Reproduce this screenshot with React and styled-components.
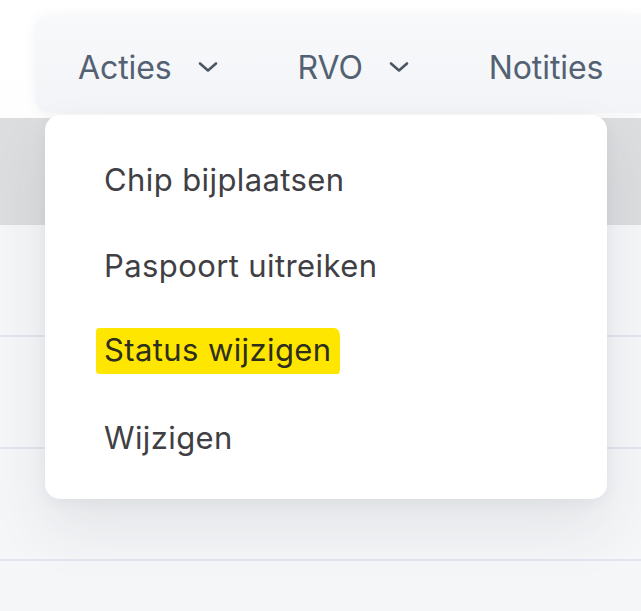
import React from "react";
import styled, { createGlobalStyle } from "styled-components";

const GlobalStyle = createGlobalStyle`
  html, body {
    margin: 0;
    padding: 0;
    background: #ffffff;
  }
  body {
    font-family: Inter, "Noto Sans", "Liberation Sans", sans-serif;
  }
`;

const Page = styled.div`
  position: relative;
  width: 641px;
  height: 611px;
  overflow: hidden;
  background: linear-gradient(180deg, #ffffff 0%, #fafbfc 100%);
`;

const Toolbar = styled.div`
  display: flex;
  align-items: center;
  gap: 80px;
  margin: 14px 0 0 35px;
  height: 99px;
  padding: 7px 0 0 43px;
  box-sizing: border-box;
  background: linear-gradient(180deg, #f8f9fb 0%, #f2f4f7 100%);
  border-radius: 16px 0 0 16px;
  box-shadow: 0 2px 14px rgba(30, 40, 60, 0.05);
`;

const TabButton = styled.div`
  display: flex;
  align-items: center;
  gap: 26px;
  font-size: 32px;
  color: #536173;
  letter-spacing: -0.1px;
`;

const Chevron = () => (
  <svg width="20" height="12" viewBox="0 0 20 12" fill="none">
    <path
      d="M2 2.5 L10 9.5 L18 2.5"
      stroke="#4a5565"
      strokeWidth="2.6"
      strokeLinecap="round"
      strokeLinejoin="round"
    />
  </svg>
);

const Table = styled.div`
  margin-top: 5px;
  display: flex;
  flex-direction: column;
`;

const HeaderRow = styled.div`
  height: 107px;
  background: #dcdddf;
`;

const Row = styled.div`
  height: 110px;
  border-bottom: 2px solid #e4e6ef;
  background: #f5f6f8;
`;

const Menu = styled.div`
  position: absolute;
  left: 45px;
  top: 115px;
  width: 562px;
  padding: 21px 0 19px;
  background: #ffffff;
  border-radius: 15px;
  box-shadow: 0 30px 60px rgba(40, 50, 70, 0.09), 0 4px 14px rgba(40, 50, 70, 0.05);
  display: flex;
  flex-direction: column;
`;

const MenuItem = styled.div`
  height: 86px;
  display: flex;
  align-items: center;
  padding-left: 59px;
  font-size: 31px;
  color: #404044;
  letter-spacing: 0.4px;
`;

const Marker = styled.span`
  margin-left: -8px;
  padding: 3px 8px 6px 8px;
  background: #ffe600;
  border-radius: 3px 6px 2px 4px / 4px 8px 6px 3px;
  color: #2e2e1e;
`;

const items = ["Chip bijplaatsen", "Paspoort uitreiken", "Status wijzigen", "Wijzigen"];

export default function App() {
  return (
    <Page>
      <GlobalStyle />
      <Toolbar>
        <TabButton>
          Acties <Chevron />
        </TabButton>
        <TabButton>
          RVO <Chevron />
        </TabButton>
        <TabButton>Notities</TabButton>
      </Toolbar>
      <Table>
        <HeaderRow />
        <Row />
        <Row />
        <Row />
        <Row />
      </Table>
      <Menu>
        {items.map((label) => (
          <MenuItem key={label}>
            {label === "Status wijzigen" ? <Marker>{label}</Marker> : label}
          </MenuItem>
        ))}
      </Menu>
    </Page>
  );
}
